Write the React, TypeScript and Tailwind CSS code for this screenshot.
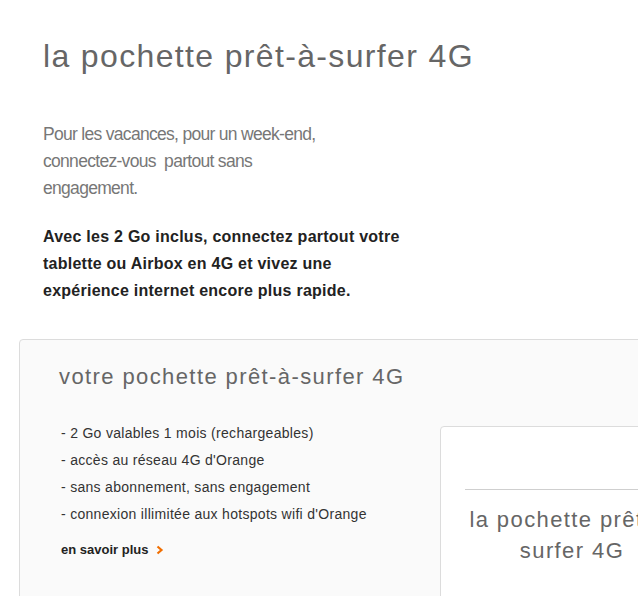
import React from "react";

export default function App() {
  return (
    <div
      className="w-[638px] h-[596px] overflow-hidden bg-white"
      style={{ fontFamily: '"Liberation Sans", Arial, sans-serif' }}
    >
      <div className="pl-[43px] pt-[36px]">
        <h1 className="text-[32px] leading-[40px] text-[#666] font-normal tracking-[1.35px] whitespace-nowrap">
          la pochette prêt-à-surfer 4G
        </h1>
        <p className="mt-[45px] text-[17.5px] leading-[27px] text-[#777] tracking-[-0.7px] whitespace-nowrap">
          Pour les vacances, pour un week-end,
          <br />
          connectez-vous&nbsp; partout sans
          <br />
          engagement.
        </p>
        <p className="mt-[21px] text-[16px] leading-[27px] text-[#222] font-bold tracking-[0.25px] whitespace-nowrap">
          Avec les 2 Go inclus, connectez partout votre
          <br />
          tablette ou Airbox en 4G et vivez une
          <br />
          expérience internet encore plus rapide.
        </p>
      </div>

      <div className="ml-[19px] mt-[35px] w-[700px] h-[300px] border border-[#dcdcdc] rounded-[4px] bg-[#fafafa] flex">
        <div className="w-[420px] pl-[39px] pt-[22px]">
          <h2 className="text-[22px] leading-[30px] text-[#666] font-normal tracking-[1.4px] whitespace-nowrap">
            votre pochette prêt-à-surfer 4G
          </h2>
          <ul className="mt-[28px] pl-[2px] text-[14px] leading-[27px] text-[#333] tracking-[0.3px] whitespace-nowrap">
            <li>- 2 Go valables 1 mois (rechargeables)</li>
            <li>- accès au réseau 4G d'Orange</li>
            <li>- sans abonnement, sans engagement</li>
            <li>- connexion illimitée aux hotspots wifi d'Orange</li>
          </ul>
          <a className="mt-[12px] pl-[2px] flex items-center gap-[8px] text-[13px] font-bold text-[#222]">
            en savoir plus
            <svg width="8" height="10" viewBox="0 0 8 10">
              <path d="M1.5 1.5 L5.5 5 L1.5 8.5" fill="none" stroke="#f16e00" strokeWidth="2.2" />
            </svg>
          </a>
        </div>
        <div className="mt-[86px] w-[264px] h-[240px] bg-white border border-[#dcdcdc] rounded-[4px] px-[24px] pt-[62px]">
          <div className="border-t border-[#cfcfcf] pt-[14px] text-center text-[22px] leading-[31px] text-[#666] tracking-[1.4px] whitespace-nowrap">
            la pochette prêt-à-
            <br />
            surfer 4G
          </div>
        </div>
      </div>
    </div>
  );
}
